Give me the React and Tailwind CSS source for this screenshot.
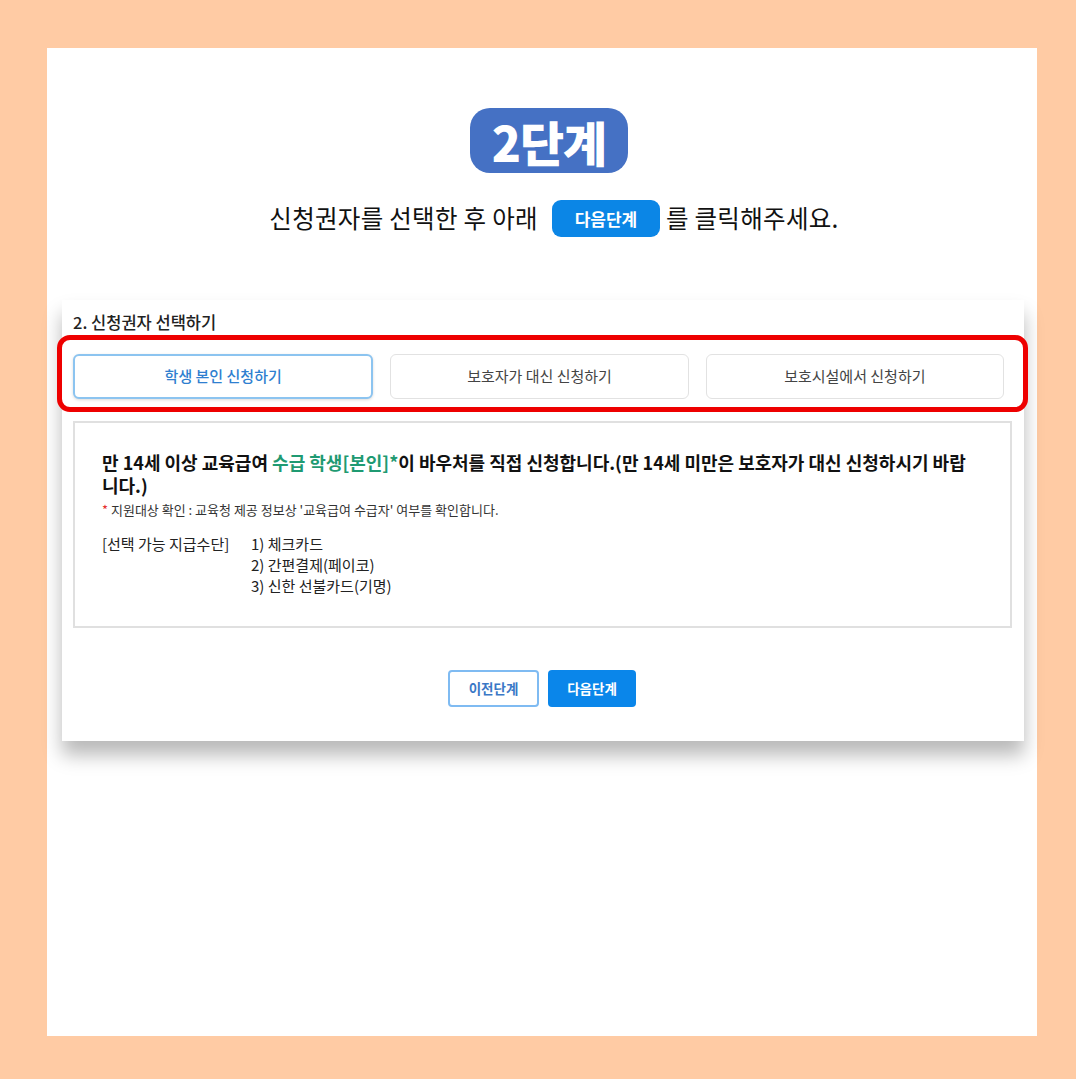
import React from 'react';

const font = { fontFamily: '"Noto Sans CJK KR", "Noto Sans", sans-serif' };

function ChoiceButton({ label, active }) {
  return (
    <button
      className={`flex-1 h-[45px] rounded-md bg-white text-[15px] ${
        active
          ? 'border-2 border-[#8cc4f0] text-[#2f7fd0] font-medium shadow-[0_1px_3px_rgba(0,0,0,0.15)]'
          : 'border border-[#e2e2e2] text-[#444]'
      }`}
    >
      {label}
    </button>
  );
}

export default function App() {
  return (
    <div className="w-[1076px] h-[1079px] bg-[#ffcba4] pt-[48px] pl-[47px]" style={font}>
      <div className="w-[990px] h-[988px] bg-white flex flex-col items-center">
        {/* 단계 뱃지 */}
        <div className="mt-[60px] ml-[14px] w-[158px] h-[65px] rounded-[20px] bg-[#4571c4] flex items-center justify-center">
          <span className="text-white text-[48px] font-black tracking-[-1px] leading-none">2단계</span>
        </div>

        <div className="mt-[27px] ml-[24px] flex items-center text-[24.5px] tracking-[0.3px] text-[#111] h-[37px]">
          <span>신청권자를 선택한 후 아래</span>
          <span className="ml-[14px] mr-[6px] w-[108px] h-[37px] rounded-[9px] bg-[#0b86e6] text-white text-[17px] tracking-normal font-bold flex items-center justify-center">
            다음단계
          </span>
          <span>를 클릭해주세요.</span>
        </div>

        {/* 캡처 카드 */}
        <div className="mt-[63px] self-start ml-[15px] w-[962px] h-[441px] bg-white shadow-[0_14px_18px_rgba(0,0,0,0.28)] px-[11px] pt-[10px]">
          <div className="text-[16.5px] font-medium text-[#222] leading-[24px]">2. 신청권자 선택하기</div>

          <div className="mt-[1px] -ml-[16px] -mr-[15px] border-[5px] border-[#ee0000] rounded-[13px] pl-[11px] pr-[19px] pt-[14px] pb-[8px] flex gap-[17px] bg-white">
            <ChoiceButton label="학생 본인 신청하기" active />
            <ChoiceButton label="보호자가 대신 신청하기" />
            <ChoiceButton label="보호시설에서 신청하기" />
          </div>

          <div className="mt-[9px] mr-[1px] h-[207px] border-2 border-[#e0e0e0] pl-[27px] pr-[36px] pt-[28px]">
            <p className="text-[18px] font-bold text-[#111] leading-[23px]">
              만 14세 이상 교육급여 <span className="text-[#1f9a72]">수급 학생[본인]*</span>이 바우처를 직접 신청합니다.(만 14세 미만은 보호자가 대신 신청하시기 바랍니다.)
            </p>
            <p className="mt-[4px] text-[13px] text-[#333] leading-[18px]">
              <span className="text-[#e53030]">*</span> 지원대상 확인 : 교육청 제공 정보상 '교육급여 수급자' 여부를 확인합니다.
            </p>
            <div className="mt-[14px] flex text-[15px] text-[#222] leading-[21px]">
              <div className="w-[149px]">[선택 가능 지급수단]</div>
              <div>
                <div>1) 체크카드</div>
                <div>2) 간편결제(페이코)</div>
                <div>3) 신한 선불카드(기명)</div>
              </div>
            </div>
          </div>

          <div className="mt-[42px] flex justify-center gap-[9px] -ml-[2px]">
            <button className="w-[91px] h-[37px] rounded-[4px] border-2 border-[#7fbbf2] text-[#3a78c6] text-[13.5px] font-bold bg-white">
              이전단계
            </button>
            <button className="w-[88px] h-[37px] rounded-[4px] bg-[#0a86ea] text-white text-[13.5px] font-bold">
              다음단계
            </button>
          </div>
        </div>
      </div>
    </div>
  );
}
